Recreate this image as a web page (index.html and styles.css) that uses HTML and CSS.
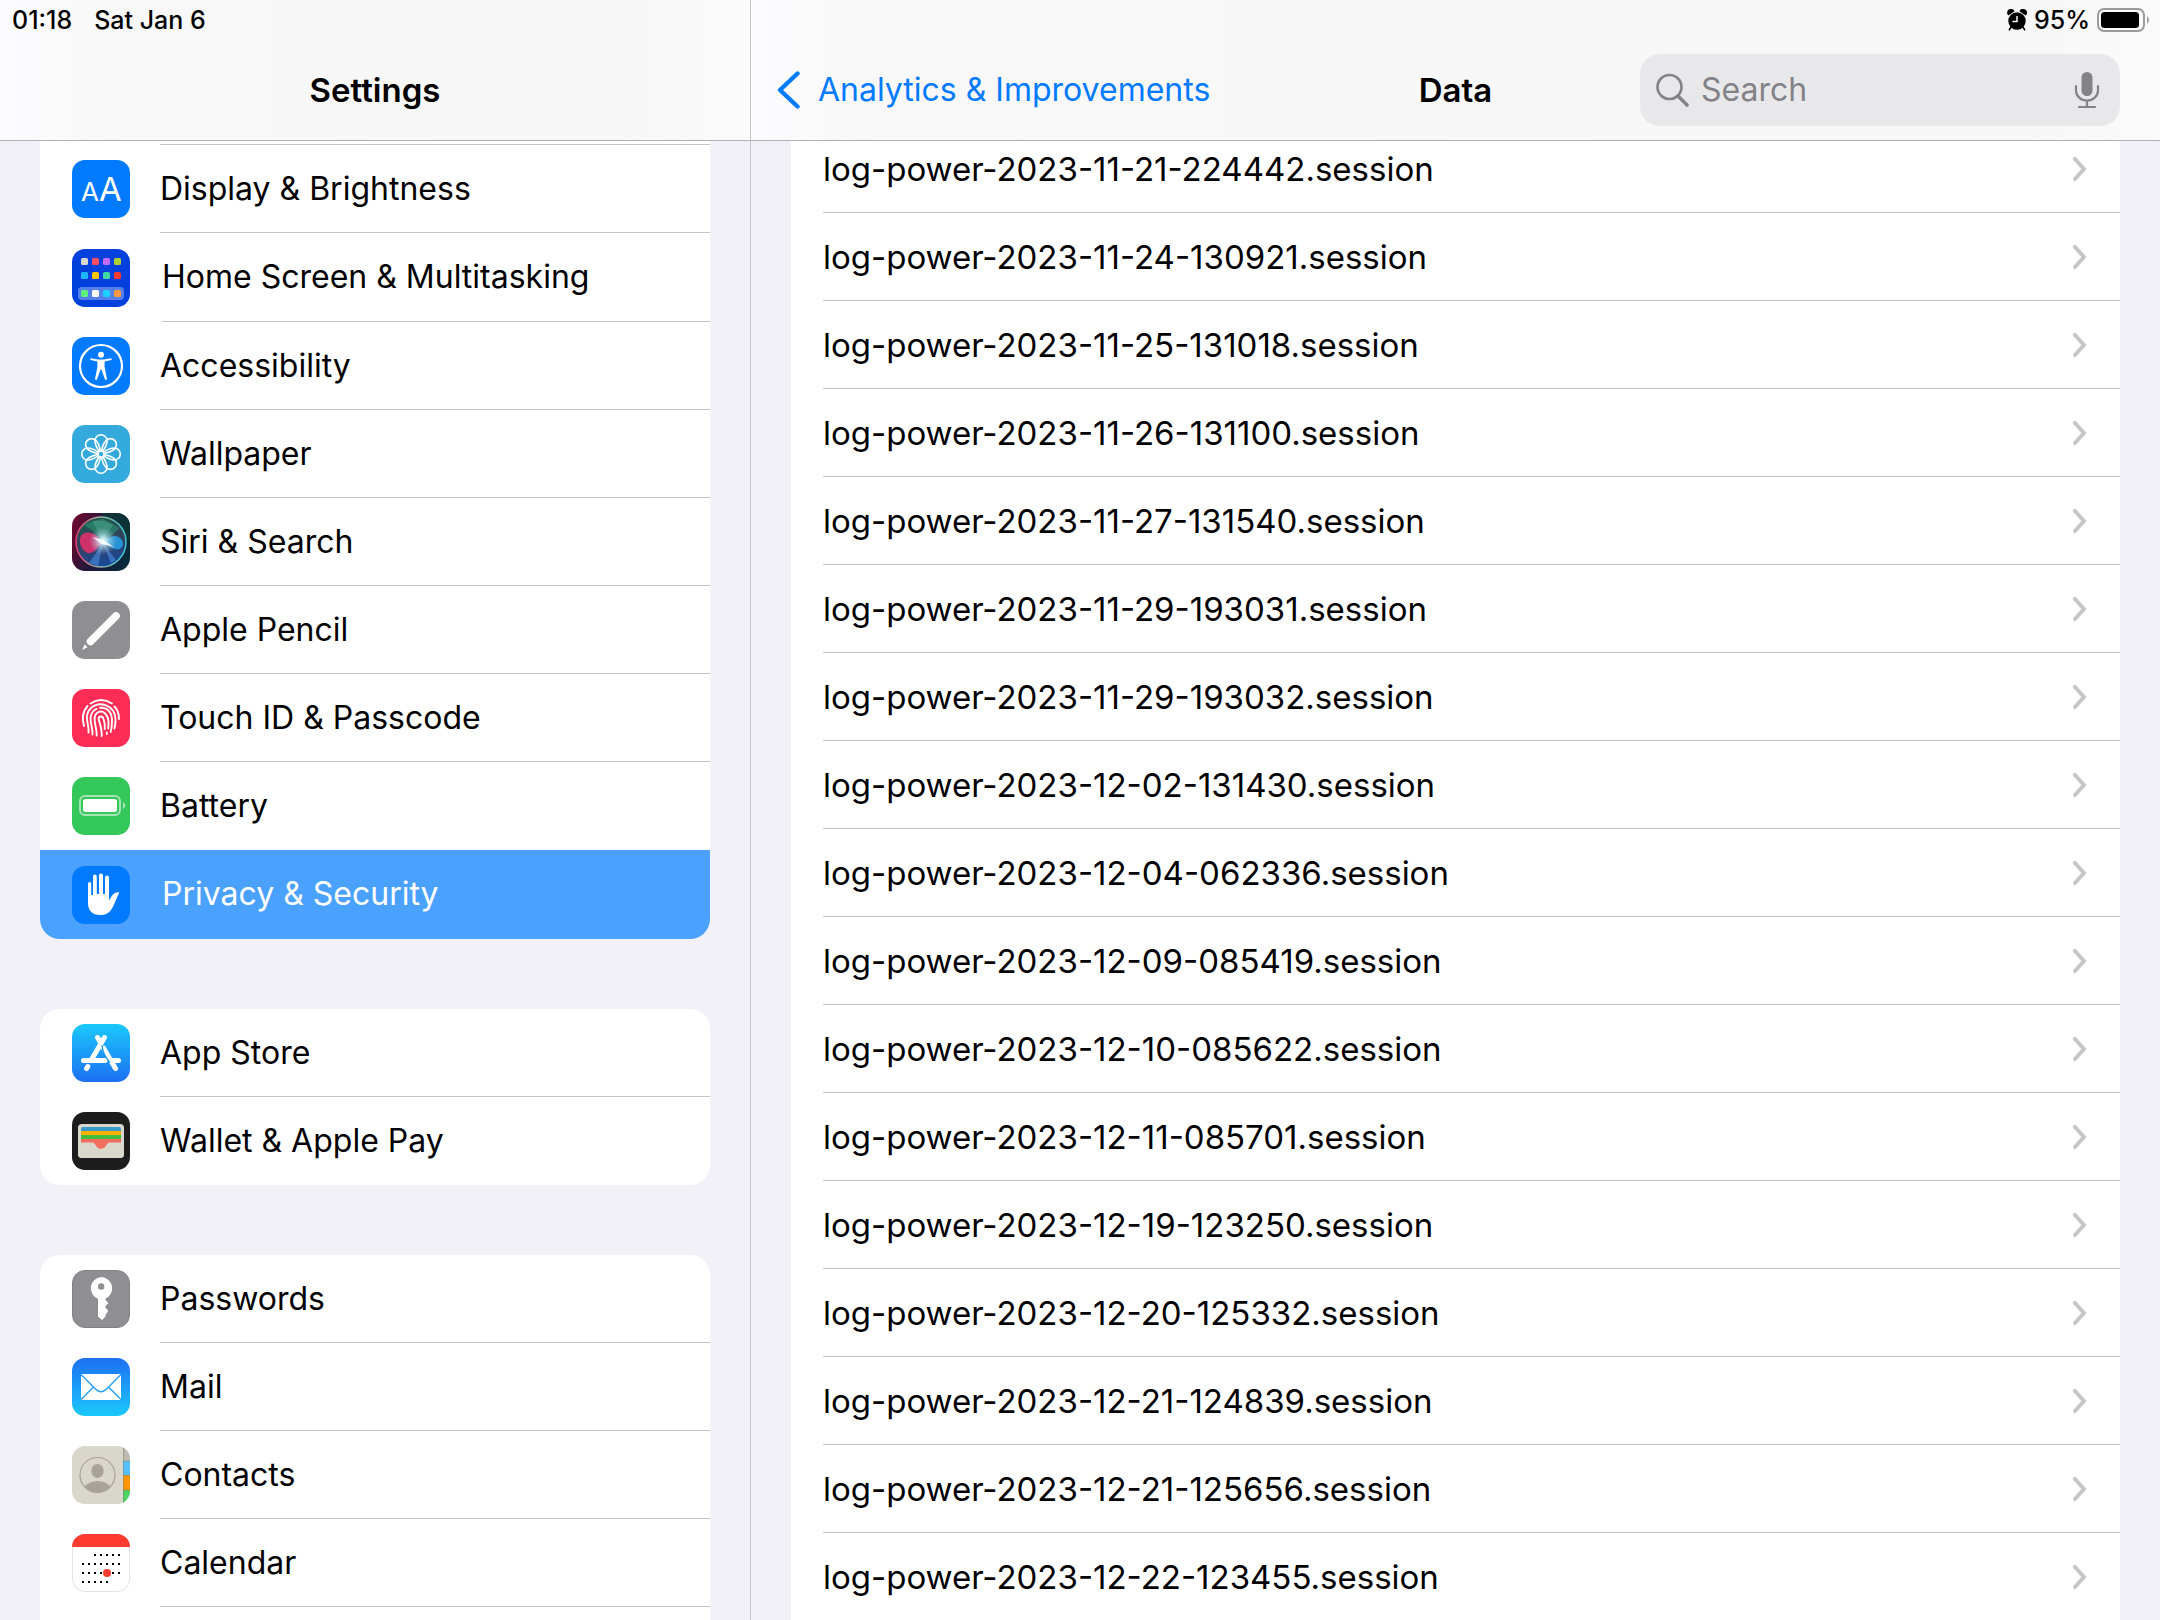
FILE: index.html
```html
<!DOCTYPE html>
<html lang="en">
<head>
<meta charset="utf-8">
<meta name="viewport" content="width=device-width, initial-scale=1">
<title>Settings</title>
<link rel="stylesheet" href="styles.css">
</head>
<body>
<aside class="pane sidebar">
  <header class="top">
    <div class="status"><span>01:18</span><span>Sat Jan 6</span></div>
    <div class="nav nav-side"><h1 class="title">Settings</h1></div>
  </header>
  <nav class="scroll">
    <div class="group group-first">
      <div class="rule"></div>
      <a class="item" href="#"><svg class="icon" viewBox="0 0 58 58"><rect width="58" height="58" rx="13" fill="#007aff"/><text class="glyph" x="9" y="41" font-size="26">A</text><text class="glyph" x="27" y="41" font-size="33">A</text></svg><span class="label">Display &amp; Brightness</span></a>
      <a class="item tall" href="#"><svg class="icon" viewBox="0 0 58 58"><rect width="58" height="58" rx="13" fill="#0040dd"/><rect x="6" y="38" width="46" height="13" rx="4" fill="#5580ec"/><g><rect x="9" y="9" width="7" height="7" rx="1.5" fill="#d9d9d0"/><rect x="20" y="9" width="7" height="7" rx="1.5" fill="#ff4f64"/><rect x="31" y="9" width="7" height="7" rx="1.5" fill="#bf6bff"/><rect x="42" y="9" width="7" height="7" rx="1.5" fill="#b0d136"/><rect x="9" y="23" width="7" height="7" rx="1.5" fill="#1cb8fb"/><rect x="20" y="23" width="7" height="7" rx="1.5" fill="#ffc400"/><rect x="31" y="23" width="7" height="7" rx="1.5" fill="#41d9a3"/><rect x="42" y="23" width="7" height="7" rx="1.5" fill="#ff3830"/><rect x="9" y="41" width="7" height="7" rx="1.5" fill="#5ef27c"/><rect x="20" y="41" width="7" height="7" rx="1.5" fill="#fff"/><rect x="31" y="41" width="7" height="7" rx="1.5" fill="#1dcfff"/><rect x="42" y="41" width="7" height="7" rx="1.5" fill="#ff9a43"/></g></svg><span class="label">Home Screen &amp; Multitasking</span></a>
      <a class="item" href="#"><svg class="icon" viewBox="0 0 58 58"><rect width="58" height="58" rx="13" fill="#007aff"/><circle cx="29" cy="29" r="21" fill="none" stroke="#fff" stroke-width="2.2"/><circle cx="29" cy="17.8" r="3" fill="#fff"/><path d="M19 21.2 26 22.5H32L39 21.2Q40.500 21.700 39.400 23L32.600 24.600V30L35 42Q34.300 43.400 33 42.600L29.400 32.500H28.600L25 42.600Q23.700 43.400 23 42L25.400 30V24.600L18.600 23Q17.500 21.700 19 21.200Z" fill="#fff"/></svg><span class="label">Accessibility</span></a>
      <a class="item" href="#"><svg class="icon" viewBox="0 0 58 58"><defs><path id="petal" d="M27.300 26.500C25.300 23.500 23 20.500 23 15.700A6 6 0 0 1 35 15.700C35 20.500 32.700 23.500 30.700 26.500"/></defs><rect width="58" height="58" rx="13" fill="#34aadc"/><g fill="none" stroke="#fff" stroke-width="1.600"><use href="#petal"/><use href="#petal" transform="rotate(45 29 29)"/><use href="#petal" transform="rotate(90 29 29)"/><use href="#petal" transform="rotate(135 29 29)"/><use href="#petal" transform="rotate(180 29 29)"/><use href="#petal" transform="rotate(225 29 29)"/><use href="#petal" transform="rotate(270 29 29)"/><use href="#petal" transform="rotate(315 29 29)"/><circle cx="29" cy="29" r="3"/></g></svg><span class="label">Wallpaper</span></a>
      <a class="item" href="#"><svg class="icon" viewBox="0 0 58 58"><defs><linearGradient id="siri-bg" x1="0" y1="0.300" x2="1" y2="0.700"><stop offset="0" stop-color="#690a30"/><stop offset="0.450" stop-color="#20173a"/><stop offset="1" stop-color="#062a3c"/></linearGradient><linearGradient id="siri-ring" x1="0" y1="0.500" x2="1" y2="0.500"><stop offset="0" stop-color="#ec3a70"/><stop offset="0.450" stop-color="#a0b6a0"/><stop offset="1" stop-color="#3ac8d4"/></linearGradient><radialGradient id="siri-glow"><stop offset="0" stop-color="#fff"/><stop offset="0.250" stop-color="#d8fbff" stop-opacity="0.800"/><stop offset="1" stop-color="#8ab8d8" stop-opacity="0"/></radialGradient><linearGradient id="siri-orb" x1="0.400" y1="0" x2="0.600" y2="1"><stop offset="0" stop-color="#1d5b4c"/><stop offset="0.500" stop-color="#33405c"/><stop offset="1" stop-color="#164aa0"/></linearGradient></defs><rect width="58" height="58" rx="13" fill="url(#siri-bg)"/><path d="M29 0H45A13 13 0 0 1 58 13V29L45 20Z" fill="#0c3c35" opacity="0.700"/><circle cx="29" cy="29" r="25" fill="url(#siri-orb)" stroke="url(#siri-ring)" stroke-width="1.500"/><path d="M12 12Q30 2 47 15Q40 24 31 28Q23 18 12 12Z" fill="#2aa078" opacity="0.500"/><path d="M31 30C25 20 14 16 9 23C5 30 12 41 18 40C24 39 26 33 31 30Z" fill="#ea2e6c" opacity="0.850"/><path d="M31 29C38 22 46 21 50 27C53 33 48 38 43 36C38 35 35 31 31 29Z" fill="#25a2e8" opacity="0.850"/><path d="M31 30 17 50 26 53ZM31 30 44 47 39 50Z" fill="#559ced" opacity="0.500"/><path d="M31 28 20 8 31 6 41 12Z" fill="#78d5b4" opacity="0.250"/><circle cx="31" cy="28" r="14" fill="url(#siri-glow)"/><path d="M20 24 31 27 42 34 30 31Z" fill="#fff" opacity="0.850"/></svg><span class="label">Siri &amp; Search</span></a>
      <a class="item" href="#"><svg class="icon" viewBox="0 0 58 58"><rect width="58" height="58" rx="13" fill="#8e8e93"/><path d="M44 15 18.500 40.500" stroke="#fff" stroke-width="7.600" stroke-linecap="round"/><path d="M10 49 12.800 43.300 15.600 46.200Z" fill="#fff"/><path d="M12 41 18 47" stroke="#8e8e93" stroke-width="1.500"/></svg><span class="label">Apple Pencil</span></a>
      <a class="item" href="#"><svg class="icon" viewBox="0 0 58 58"><rect width="58" height="58" rx="13" fill="#ff2d55"/><g fill="none" stroke="#fff" stroke-width="1.900" stroke-linecap="round"><path d="M18.500 14.500Q29 7.500 40 14.500M15.500 17Q8.500 25 12 37M42.500 17.500Q47 22 47 30M16.500 43.500C17.500 35 11 27 18.500 19.500C27 11 43 16 43.500 30Q43.500 36 42.500 39.500M20.500 45.500C21 37 15.500 29 21 22.500Q22.500 20.500 24.500 19.800M28 18.800C36 18 40 24 40 32Q40 38 38.700 43M24.700 46.500C25 38 19.500 28 25 24C31 19.500 36 26 36.500 33Q36.500 36 36.200 39.500M34.800 43.500V45M29.700 47C30 40 28.500 36 26.800 31C26 27 30.500 26 31.500 30C33 34 33 37 32.800 40"/></g></svg><span class="label">Touch ID &amp; Passcode</span></a>
      <a class="item before-selected" href="#"><svg class="icon" viewBox="0 0 58 58"><rect width="58" height="58" rx="13" fill="#34c759"/><rect x="8" y="19" width="40" height="19" rx="5" fill="none" stroke="#a5e5b5" stroke-width="2"/><rect x="11" y="22" width="34" height="13" rx="2.500" fill="#fff"/><path d="M51 25Q56 28.500 51 32Z" fill="#a5e5b5"/></svg><span class="label">Battery</span></a>
      <a class="item tall selected" href="#" aria-current="page"><svg class="icon" viewBox="0 0 58 58"><rect width="58" height="58" rx="13" fill="#007aff"/><path d="M16 17.500A1.600 1.600 0 0 1 19.200 17.500V29H21V10.500A1.900 1.900 0 0 1 24.800 10.500V28H27V9.500A2 2 0 0 1 31 9.500V28H33V11.500A1.900 1.900 0 0 1 37 11.500V34.500L40.500 29Q43 25.500 47.300 26.300L42 38.500C38.500 46.500 35 49 28.500 49C20 49 16 44.500 16 37Z" fill="#fff"/></svg><span class="label">Privacy &amp; Security</span></a>
    </div>
    <div class="group">
      <a class="item" href="#"><svg class="icon" viewBox="0 0 58 58"><defs><linearGradient id="store" x2="0" y2="1"><stop offset="0" stop-color="#1ac8fc"/><stop offset="1" stop-color="#1d70f2"/></linearGradient></defs><rect width="58" height="58" rx="13" fill="url(#store)"/><g fill="none" stroke="#fff" stroke-width="5" stroke-linecap="round"><path d="M32.500 13.500 19 36.500M15.800 42.500 14.600 44.600M11.500 36.500H33M25.500 13.500 28 17.800M31.500 24 43.500 44.500M41 36.500H46.500"/></g><path d="M30 21Q30.500 30 38 38.500" fill="none" stroke="#1b9bf8" stroke-width="1.300"/></svg><span class="label">App Store</span></a>
      <a class="item" href="#"><svg class="icon" viewBox="0 0 58 58"><rect width="58" height="58" rx="13" fill="#1d1d1d"/><rect x="6" y="12" width="46" height="34" rx="4" fill="#dad7cc"/><path d="M9 19V17Q9 15 11 15H47Q49 15 49 17V19Z" fill="#3b99c9"/><path d="M9 19H49V23H9Z" fill="#ffb003"/><path d="M9 23H49V27H9Z" fill="#40bf3d"/><path d="M9 27H49V31H9Z" fill="#f26d5f"/><path d="M6 30.500H21C23.500 30.500 24 36.800 29 36.800S34.500 30.500 37 30.500H52V42Q52 46 48 46H10Q6 46 6 42Z" fill="#dad7cc"/><path d="M21 30.500C23.500 31 24 36.800 29 36.800S34.500 31 37 30.500Z" fill="#f26d5f"/></svg><span class="label">Wallet &amp; Apple Pay</span></a>
    </div>
    <div class="group">
      <a class="item" href="#"><svg class="icon" viewBox="0 0 58 58"><rect x="0.500" y="0.500" width="57" height="57" rx="12.500" fill="#8e8e93" stroke="#808085"/><path fill-rule="evenodd" d="M29.200 7A11.300 11.300 0 0 1 33.500 28.600V30L36.300 33 33 36.800 36.300 41 33.500 45V46.500L30 50 26 46.500V28.800A11.300 11.300 0 0 1 29.200 7ZM29.200 13.300A3.200 3.200 0 1 0 29.200 19.700A3.200 3.200 0 1 0 29.200 13.300Z" fill="#fff"/></svg><span class="label">Passwords</span></a>
      <a class="item" href="#"><svg class="icon" viewBox="0 0 58 58"><defs><linearGradient id="mail" x2="0" y2="1"><stop offset="0" stop-color="#1d70f2"/><stop offset="1" stop-color="#1ac8fc"/></linearGradient></defs><rect width="58" height="58" rx="13" fill="url(#mail)"/><rect x="9" y="16" width="40" height="26" rx="1" fill="#fff"/><path d="M9 16.500 23.500 31Q29 36.500 34.500 31L49 16.500M9 41.500 21.500 29M49 41.500 36.500 29" fill="none" stroke="#2ba2f7" stroke-width="1.500"/></svg><span class="label">Mail</span></a>
      <a class="item" href="#"><svg class="icon" viewBox="0 0 58 58"><defs><clipPath id="tile"><rect width="58" height="58" rx="13"/></clipPath><clipPath id="face"><circle cx="25.500" cy="29" r="17.500"/></clipPath></defs><g clip-path="url(#tile)"><rect width="58" height="58" fill="#d9d6cc"/><rect x="51" width="7" height="15" fill="#bfbab1"/><rect x="51" y="15" width="7" height="14" fill="#55c0fa"/><rect x="51" y="29" width="7" height="15" fill="#ff9500"/><rect x="51" y="44" width="7" height="14" fill="#4cd463"/><path d="M51.500 0V58M51 15H58M51 29.500H58M51 44.500H58" stroke="#807b6c" stroke-opacity="0.500"/></g><circle cx="25.500" cy="29" r="17.500" fill="none" stroke="#a9a29a" stroke-width="1.200"/><g fill="#a9a29a" clip-path="url(#face)"><ellipse cx="25.500" cy="25" rx="6.200" ry="7"/><ellipse cx="25.500" cy="44" rx="14" ry="9"/></g></svg><span class="label">Contacts</span></a>
      <a class="item" href="#"><svg class="icon" viewBox="0 0 58 58"><rect x="0.500" y="0.500" width="57" height="57" rx="12.500" fill="#fff" stroke="#e3e3e3"/><path d="M0 13A13 13 0 0 1 13 0H45A13 13 0 0 1 58 13Z" fill="#ff3b30"/><path d="M22 21H49M10 30H49M10 39H49M10 48H37" stroke="#000" stroke-width="2" stroke-dasharray="2 4"/><circle cx="35" cy="39" r="4" fill="#ff3b30"/></svg><span class="label">Calendar</span></a>
      <div class="item"></div>
    </div>
  </nav>
</aside>
<main class="pane detail">
  <header class="top">
    <div class="status status-end">
      <svg class="alarm" viewBox="0 0 20 22"><circle cx="10" cy="12" r="8.700"/><path d="M1.500 5.500A3 3 0 0 1 6.500 2ZM18.500 5.500A3 3 0 0 0 13.500 2ZM4 18 2.300 20.800M16 18 17.700 20.800" stroke="#000" stroke-width="1.600" stroke-linecap="round"/><path d="M10 7V12.500H5.500" fill="none" stroke="#f9f9f9" stroke-width="1.500"/></svg>
      <span>95%</span>
      <svg class="battery" viewBox="0 0 54 24"><rect x="1" y="1" width="46" height="22" rx="6" fill="none" stroke="#9b9b9b" stroke-width="2"/><rect x="4" y="4" width="38" height="16" rx="3.500"/><path d="M50 8Q54 12 50 16Z" fill="#9b9b9b"/></svg>
    </div>
    <div class="nav nav-detail">
      <a class="back" href="#"><svg class="back-icon" viewBox="0 0 23 38"><path d="M20.500 2.500 3 19 20.500 35.500" fill="none" stroke="#007aff" stroke-width="4.400" stroke-linecap="round" stroke-linejoin="round"/></svg>Analytics &amp; Improvements</a>
      <h2 class="title">Data</h2>
      <label class="search">
        <svg class="lens" viewBox="0 0 33 34"><circle cx="13.500" cy="14" r="12" fill="none" stroke="#838387" stroke-width="2.600"/><path d="M22 23 31 32" stroke="#838387" stroke-width="3.600" stroke-linecap="round"/></svg>
        <input class="field" type="search" placeholder="Search" aria-label="Search">
        <svg class="mic" viewBox="0 0 24 36"><rect x="6.500" width="11" height="24" rx="5.500" fill="#838387"/><path d="M1 14V18.500A11 10 0 0 0 23 18.500V14M12 29V35M4 35H20" fill="none" stroke="#838387" stroke-width="2.200" stroke-linecap="round"/></svg>
      </label>
    </div>
  </header>
  <div class="scroll">
    <div class="logs">
      <a class="log" href="#"><span>log-power-2023-11-21-224442.session</span><svg class="chev" viewBox="0 0 13 24"><path d="M2 2 11 12 2 22"/></svg></a>
      <a class="log" href="#"><span>log-power-2023-11-24-130921.session</span><svg class="chev" viewBox="0 0 13 24"><path d="M2 2 11 12 2 22"/></svg></a>
      <a class="log" href="#"><span>log-power-2023-11-25-131018.session</span><svg class="chev" viewBox="0 0 13 24"><path d="M2 2 11 12 2 22"/></svg></a>
      <a class="log" href="#"><span>log-power-2023-11-26-131100.session</span><svg class="chev" viewBox="0 0 13 24"><path d="M2 2 11 12 2 22"/></svg></a>
      <a class="log" href="#"><span>log-power-2023-11-27-131540.session</span><svg class="chev" viewBox="0 0 13 24"><path d="M2 2 11 12 2 22"/></svg></a>
      <a class="log" href="#"><span>log-power-2023-11-29-193031.session</span><svg class="chev" viewBox="0 0 13 24"><path d="M2 2 11 12 2 22"/></svg></a>
      <a class="log" href="#"><span>log-power-2023-11-29-193032.session</span><svg class="chev" viewBox="0 0 13 24"><path d="M2 2 11 12 2 22"/></svg></a>
      <a class="log" href="#"><span>log-power-2023-12-02-131430.session</span><svg class="chev" viewBox="0 0 13 24"><path d="M2 2 11 12 2 22"/></svg></a>
      <a class="log" href="#"><span>log-power-2023-12-04-062336.session</span><svg class="chev" viewBox="0 0 13 24"><path d="M2 2 11 12 2 22"/></svg></a>
      <a class="log" href="#"><span>log-power-2023-12-09-085419.session</span><svg class="chev" viewBox="0 0 13 24"><path d="M2 2 11 12 2 22"/></svg></a>
      <a class="log" href="#"><span>log-power-2023-12-10-085622.session</span><svg class="chev" viewBox="0 0 13 24"><path d="M2 2 11 12 2 22"/></svg></a>
      <a class="log" href="#"><span>log-power-2023-12-11-085701.session</span><svg class="chev" viewBox="0 0 13 24"><path d="M2 2 11 12 2 22"/></svg></a>
      <a class="log" href="#"><span>log-power-2023-12-19-123250.session</span><svg class="chev" viewBox="0 0 13 24"><path d="M2 2 11 12 2 22"/></svg></a>
      <a class="log" href="#"><span>log-power-2023-12-20-125332.session</span><svg class="chev" viewBox="0 0 13 24"><path d="M2 2 11 12 2 22"/></svg></a>
      <a class="log" href="#"><span>log-power-2023-12-21-124839.session</span><svg class="chev" viewBox="0 0 13 24"><path d="M2 2 11 12 2 22"/></svg></a>
      <a class="log" href="#"><span>log-power-2023-12-21-125656.session</span><svg class="chev" viewBox="0 0 13 24"><path d="M2 2 11 12 2 22"/></svg></a>
      <a class="log" href="#"><span>log-power-2023-12-22-123455.session</span><svg class="chev" viewBox="0 0 13 24"><path d="M2 2 11 12 2 22"/></svg></a>
    </div>
  </div>
</main>
</body>
</html>
```
FILE: styles.css
```css
* { box-sizing: border-box; }

body {
  display: flex;
  height: 100vh;
  margin: 0;
  overflow: hidden;
  background: #f2f1f7;
  color: #000;
  font-family: Inter, "Liberation Sans", sans-serif;
  font-size: 32px;
  line-height: 40px;
}

a { color: inherit; text-decoration: none; }
svg { display: block; flex: none; }

.pane { display: flex; flex-direction: column; min-width: 0; }
.sidebar { flex: none; width: 751px; border-right: 1px solid #c4c3c8; }
.detail { flex: 1; }

.top {
  flex: none;
  border-bottom: 1px solid #b1b0b4;
  background: linear-gradient(to right, #fcfcfe, #f8f8f8 120px, #f7f7f7 calc(100% - 120px), #fbfbfc);
}
.status {
  display: flex;
  align-items: center;
  gap: 22px;
  height: 40px;
  padding: 0 9px 0 12px;
  font-size: 25px;
  font-weight: 500;
}
.status-end { justify-content: flex-end; gap: 7px; }
.alarm { width: 20px; height: 22px; }
.battery { width: 54px; height: 24px; }

.nav { height: 100px; align-items: center; }
.nav-side { display: flex; justify-content: center; }
.nav-detail { display: grid; grid-template-columns: 1fr auto 1fr; }
.title { margin: 0; font-size: 33px; font-weight: 600; }
.back {
  display: flex;
  align-items: center;
  gap: 18px;
  padding-left: 26px;
  color: #007aff;
  white-space: nowrap;
}
.back-icon { width: 23px; height: 38px; }

.search {
  display: flex;
  align-items: center;
  justify-self: end;
  gap: 12px;
  width: 480px;
  height: 72px;
  margin-right: 40px;
  padding: 0 21px 0 16px;
  border-radius: 20px;
  background: #e8e8ea;
}
.field {
  flex: 1;
  min-width: 0;
  padding: 0;
  border: 0;
  outline: 0;
  background: none;
  color: #000;
  font: inherit;
  appearance: none;
}
.field::placeholder { color: #838387; opacity: 1; }
.lens { width: 33px; height: 34px; }
.mic { width: 24px; height: 36px; overflow: visible; }

.scroll { flex: 1; min-height: 0; overflow: hidden; }

.group {
  margin: 0 40px 70px;
  border-radius: 20px;
  overflow: hidden;
  background: #fff;
}
.group-first { border-radius: 0 0 20px 20px; }
.rule { height: 4px; margin-left: 120px; border-bottom: 1px solid #c6c6c8; }

.item { display: flex; align-items: center; gap: 30px; height: 88px; padding-left: 32px; }
.tall { gap: 32px; height: 89px; }
.icon { width: 58px; height: 58px; }
.label {
  display: flex;
  flex: 1;
  align-items: center;
  height: 100%;
  border-bottom: 1px solid #c6c6c8;
  white-space: nowrap;
}
.item:last-child .label,
.before-selected .label { border-bottom-color: transparent; }
.selected { background: #4ba1ff; color: #fff; }
.glyph { fill: #fff; font-family: Inter, sans-serif; font-weight: 400; }

/* The list is scrolled slightly, so its first row sits partly under the bar */
.logs { margin: -16px 40px 0; padding-left: 32px; background: #fff; font-size: 33px; }
.log {
  display: flex;
  align-items: center;
  justify-content: space-between;
  height: 88px;
  padding-right: 34px;
  border-bottom: 1px solid #c6c6c8;
}
.chev { width: 13px; height: 24px; fill: none; stroke: #c5c5c7; stroke-width: 4; stroke-linecap: round; stroke-linejoin: round; }
```
